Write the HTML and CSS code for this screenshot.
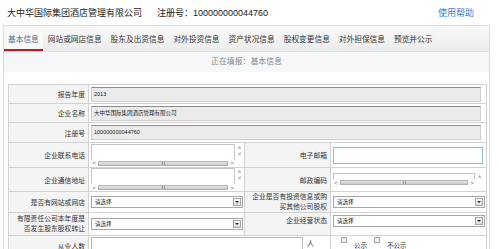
FILE: index.html
```html
<!DOCTYPE html>
<html lang="zh">

<head>
    <meta charset="UTF-8">
    <title>基本信息</title>
    <link rel="stylesheet" href="styles.css">
</head>

<body>
    <!-- 顶部 -->
    <div class="top">
        <span class="company">大中华国际集团酒店管理有限公司</span>
        <span class="regno">注册号：100000000044760</span>
        <a class="help" href="#">使用帮助</a>
    </div>

    <div class="panel">
        <!-- 标签页 -->
        <div class="tabs">
            <span class="tab active">基本信息</span>
            <span class="tab">网站或网店信息</span>
            <span class="tab">股东及出资信息</span>
            <span class="tab">对外投资信息</span>
            <span class="tab">资产状况信息</span>
            <span class="tab">股权变更信息</span>
            <span class="tab">对外担保信息</span>
            <span class="tab">预览并公示</span>
        </div>

        <div class="status">正在填报：基本信息</div>

        <table class="form">
            <colgroup>
                <col class="c1">
                <col class="c2">
                <col class="c3">
                <col class="c4">
            </colgroup>
            <tr class="r1">
                <td class="lbl">报告年度</td>
                <td colspan="3"><div class="ro">2013</div></td>
            </tr>
            <tr class="r2">
                <td class="lbl">企业名称</td>
                <td colspan="3"><div class="ro">大中华国际集团酒店管理有限公司</div></td>
            </tr>
            <tr class="r3">
                <td class="lbl">注册号</td>
                <td colspan="3"><div class="ro">100000000044760</div></td>
            </tr>
            <tr class="r4">
                <td class="lbl">企业联系电话</td>
                <td>
                    <div class="ta">
                        <div class="ta-box"></div>
                        <div class="ta-v"><span>&#708;</span><span>&#709;</span></div>
                        <div class="ta-h"><span class="arr">&#706;</span><span class="thumb"><i></i></span><span class="arr">&#707;</span></div>
                    </div>
                </td>
                <td class="lbl">电子邮箱</td>
                <td><div class="email"></div></td>
            </tr>
            <tr class="r5">
                <td class="lbl">企业通信地址</td>
                <td>
                    <div class="ta">
                        <div class="ta-box"></div>
                        <div class="ta-v"><span>&#708;</span><span>&#709;</span></div>
                        <div class="ta-h"><span class="arr">&#706;</span><span class="thumb"><i></i></span><span class="arr">&#707;</span></div>
                    </div>
                </td>
                <td class="lbl">邮政编码</td>
                <td>
                    <div class="ta short">
                        <div class="ta-box"></div>
                        <div class="ta-v"><span>&#708;</span></div>
                        <div class="ta-h"><span class="arr">&#706;</span><span class="thumb"><i></i></span><span class="arr">&#707;</span></div>
                    </div>
                </td>
            </tr>
            <tr class="r6">
                <td class="lbl">是否有网站或网店</td>
                <td><div class="sel">请选择<span class="btn"></span></div></td>
                <td class="lbl two">企业是否有投资信息或购<br>买其他公司股权</td>
                <td><div class="sel">请选择<span class="btn"></span></div></td>
            </tr>
            <tr class="r7">
                <td class="lbl two">有限责任公司本年度是<br>否发生股东股权转让</td>
                <td><div class="sel">请选择<span class="btn"></span></div></td>
                <td class="lbl top-al">企业经营状态</td>
                <td class="top-al"><div class="sel">请选择<span class="btn"></span></div></td>
            </tr>
            <tr class="r8">
                <td class="lbl">从业人数</td>
                <td colspan="2"><div class="staff"><div class="num"></div><span>人</span></div></td>
                <td>
                    <div class="pub">
                        <span class="chk"></span><span class="txt">公示</span>
                        <span class="chk"></span><span class="txt">不公示</span>
                    </div>
                </td>
            </tr>
        </table>
    </div>
</body>

</html>
```

FILE: styles.css
```css
/* 页面 */
* {
    margin: 0;
    padding: 0;
    box-sizing: border-box;
}

body {
    font-family: "Liberation Sans", "Noto Sans CJK SC", sans-serif;
    background: #fff;
    color: #333;
    overflow: hidden;
}

.top {
    display: flex;
    align-items: center;
    height: 25px;
    padding: 0 25px 0 7px;
    font-size: 9px;
    color: #222;
}

.regno {
    margin-left: 15px;
}

.help {
    margin-left: auto;
    color: #3b7dd8;
    text-decoration: none;
}

.panel {
    margin: 0 9px 0 3px;
    border: 1px solid #dcdcdc;
    border-bottom: none;
    height: 230px;
}

/* 标签页 */
.tabs {
    display: flex;
    align-items: stretch;
    height: 26px;
    background: linear-gradient(#f9f9f9, #ececec);
    border-bottom: 1px solid #e2e2e2;
    font-size: 7.7px;
    gap: 1px;
}

.tab {
    display: flex;
    align-items: center;
    padding: 0 4px;
    color: #333;
    white-space: nowrap;
}

.tab.active {
    color: #5a6a7a;
    background: #f8f8f8;
    border-bottom: 2px solid #c4161c;
    padding-top: 2px;
}

.status {
    height: 20px;
    line-height: 20px;
    text-align: center;
    background: #f5f7f9;
    font-size: 7.9px;
    color: #888;
}

/* 表格 */
.form {
    margin: 12px 0 0 4px;
    width: 478px;
    border-collapse: collapse;
    table-layout: fixed;
}

.c1 { width: 80px; }
.c2 { width: 156px; }
.c3 { width: 86px; }
.c4 { width: 156px; }

.form td {
    border: 1px solid #d2d2d2;
    padding: 0 0 0 2px;
    vertical-align: middle;
    font-size: 5.5px;
}

.form td.lbl {
    background: #f4f4f4;
    text-align: right;
    padding: 0 3px 0 0;
    font-size: 6.8px;
    color: #333;
    white-space: nowrap;
}

.form td.two {
    line-height: 10px;
}

.r1, .r2 { height: 19px; }
.r3 { height: 20px; }
.r4 { height: 25px; }
.r5 { height: 24px; }
.r6 { height: 20px; }
.r7 { height: 23px; }
.r8 { height: 20px; }

.ro {
    width: 390px;
    height: 15px;
    line-height: 13px;
    border: 1px solid #cfcfcf;
    border-top-color: #8c8c8c;
    background: #ebebeb;
    padding-left: 2px;
    color: #222;
}

.email {
    width: 150px;
    height: 17px;
    border: 1px solid #8fbfca;
    background: #fcfeff;
}

/* 多行文本框 */
.ta {
    display: grid;
    grid-template-columns: 1fr 9px;
    grid-template-rows: 16px 7px;
    width: 153px;
}

.ta.short {
    grid-template-rows: 6px 7px;
    width: 151px;
}

.ta-box {
    background: #fff;
    border: 1px solid #c4c4c4;
    border-bottom: none;
}

.ta-v {
    grid-row: span 2;
    display: flex;
    flex-direction: column;
    align-items: center;
    font-size: 6px;
    line-height: 6px;
    color: #555;
    padding-top: 1px;
}

.ta-h {
    display: flex;
    align-items: center;
    font-size: 6px;
    color: #555;
}

.ta-h .arr {
    width: 6px;
    text-align: center;
}

.ta-h .thumb {
    flex: 1;
    height: 5px;
    background: linear-gradient(#e4e4e4, #c8c8c8);
    border: 1px solid #b4b4b4;
    margin: 0 1px;
    display: flex;
    justify-content: center;
}

.ta-h .thumb i {
    width: 3px;
    border-left: 1px solid #999;
    border-right: 1px solid #999;
}

/* 下拉框 */
.sel {
    display: flex;
    align-items: center;
    width: 152px;
    height: 12px;
    border: 1px solid #a8a8a8;
    background: #fff;
    padding-left: 3px;
    color: #222;
}

.sel .btn {
    margin-left: auto;
    margin-right: 1px;
    width: 8px;
    height: 8px;
    border: 1px solid #a5a5a5;
    background: linear-gradient(#fbfbfb, #dcdcdc);
    position: relative;
}

.sel .btn::after {
    content: "";
    position: absolute;
    left: 1px;
    top: 2px;
    border-left: 2px solid transparent;
    border-right: 2px solid transparent;
    border-top: 2px solid #222;
}

.top-al {
    vertical-align: top !important;
    padding-top: 2px !important;
}

/* 从业人数 */
.staff {
    display: flex;
    align-items: flex-start;
    height: 19px;
    padding-top: 1px;
}

.staff .num {
    width: 212px;
    height: 18px;
    border: 1px solid #b8b8b8;
    background: #fff;
}

.staff span {
    font-size: 7px;
    line-height: 8px;
    margin: 3px 0 0 4px;
}

.pub {
    display: flex;
    align-items: flex-start;
    height: 19px;
    padding: 1px 0 0 8px;
    font-size: 6.5px;
    line-height: 7px;
}

.chk {
    width: 6px;
    height: 6px;
    border: 1px solid #a8a8a8;
    background: #f0f0f0;
}

.txt {
    margin: 5px 7px 0 7px;
}
```
